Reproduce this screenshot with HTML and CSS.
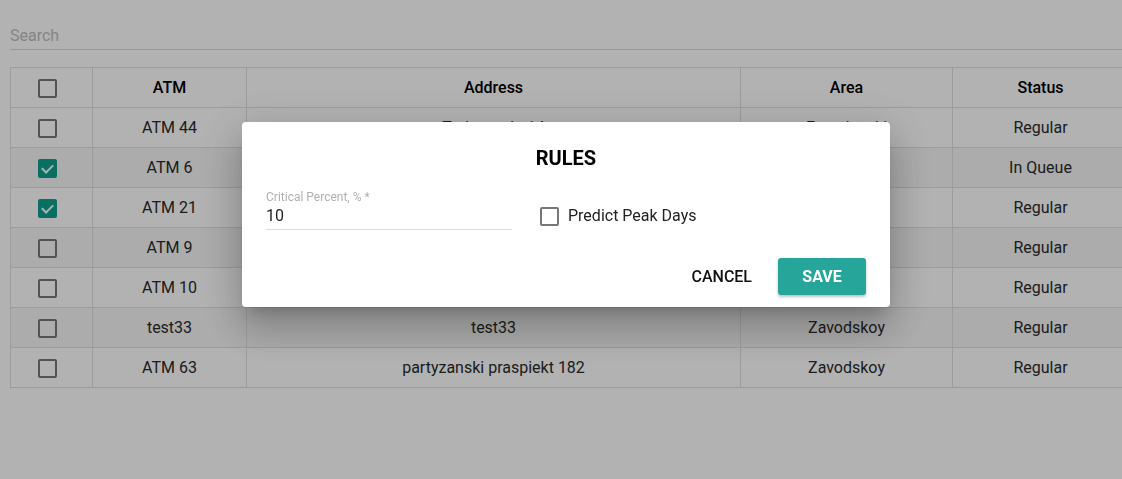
FILE: index.html
```html
<!DOCTYPE html>
<html>
<head>
<meta charset="utf-8">
<link rel="stylesheet" href="styles.css">
</head>
<body>
<div class="page">
  <div class="search"><input class="search-input" type="text" placeholder="Search"></div>
  <table class="grid">
    <colgroup>
      <col class="c-check"><col class="c-atm"><col class="c-addr"><col class="c-area"><col class="c-status">
    </colgroup>
    <thead>
      <tr><th class="cell-check"><span class="cb"></span></th><th>ATM</th><th>Address</th><th>Area</th><th>Status</th></tr>
    </thead>
    <tbody>
      <tr><td class="cell-check"><span class="cb"></span></td><td>ATM 44</td><td>Traktarnaja 14</td><td>Frunzienski</td><td>Regular</td></tr>
      <tr><td class="cell-check"><span class="cb on"></span></td><td>ATM 6</td><td>Niezaliežnasci 12</td><td>Savieckaja</td><td>In Queue</td></tr>
      <tr><td class="cell-check"><span class="cb on"></span></td><td>ATM 21</td><td>Pieramohi 4</td><td>Centralny</td><td>Regular</td></tr>
      <tr><td class="cell-check"><span class="cb"></span></td><td>ATM 9</td><td>Kalinina 7</td><td>Maskouski</td><td>Regular</td></tr>
      <tr><td class="cell-check"><span class="cb"></span></td><td>ATM 10</td><td>Lienina 22</td><td>Leninski</td><td>Regular</td></tr>
      <tr><td class="cell-check"><span class="cb"></span></td><td>test33</td><td>test33</td><td>Zavodskoy</td><td>Regular</td></tr>
      <tr><td class="cell-check"><span class="cb"></span></td><td>ATM 63</td><td>partyzanski praspiekt 182</td><td>Zavodskoy</td><td>Regular</td></tr>
    </tbody>
  </table>
</div>
<div class="overlay">
  <div class="dialog">
    <h2 class="title">RULES</h2>
    <div class="form-row">
      <label class="field">
        <span class="field-label">Critical Percent, % *</span>
        <span class="field-value">10</span>
      </label>
      <label class="check-label"><span class="cb"></span>Predict Peak Days</label>
    </div>
    <div class="actions">
      <button class="btn btn-text">CANCEL</button>
      <button class="btn btn-primary">SAVE</button>
    </div>
  </div>
</div>
</body>
</html>
```

FILE: styles.css
```css
html, body {
  margin: 0;
  padding: 0;
  height: 100%;
  overflow: hidden;
  background: #fff;
  font-family: Roboto, "Liberation Sans", sans-serif;
}
.page {
  padding-left: 10px;
  width: 1118px;
}
.search {
  padding-top: 22px;
  border-bottom: 1px solid #d8d8d8;
}
.search-input {
  display: block;
  width: 100%;
  border: 0;
  outline: none;
  padding: 0;
  height: 27px;
  font: 400 16px Roboto, sans-serif;
  background: transparent;
}
.search-input::placeholder { color: #c0c0c0; }
.grid {
  margin-top: 17px;
  width: 1118px;
  border-collapse: collapse;
  table-layout: fixed;
  font-size: 16px;
}
.c-check { width: 82px; }
.c-atm { width: 154px; }
.c-addr { width: 494px; }
.c-area { width: 212px; }
.c-status { width: 176px; }
.grid th, .grid td {
  border: 1px solid #e0e0e0;
  height: 39px;
  padding: 0;
  text-align: center;
  vertical-align: middle;
}
.grid .cell-check { padding-right: 8px; }
.grid th { font-weight: 500; color: #000; }
.grid td { color: #2a2a2a; }
.grid tbody tr:nth-child(even) { background: #f6f6f6; }
.cb {
  display: inline-block;
  box-sizing: border-box;
  width: 19px;
  height: 19px;
  border: 2px solid #777;
  border-radius: 2px;
  vertical-align: middle;
  position: relative;
}
.cb.on {
  background: #0f9f8f;
  border-color: #0f9f8f;
}
.cb.on::after {
  content: "";
  position: absolute;
  left: 4px;
  top: 1px;
  width: 5px;
  height: 9px;
  border: solid #fff;
  border-width: 0 2px 2px 0;
  transform: rotate(45deg);
}
.overlay {
  position: fixed;
  inset: 0;
  background: rgba(0, 0, 0, 0.3);
}
.dialog {
  position: absolute;
  left: 242px;
  top: 122px;
  width: 648px;
  height: 185px;
  box-sizing: border-box;
  padding: 24px 24px 0;
  background: #fff;
  border-radius: 4px;
  box-shadow: 0 11px 15px -7px rgba(0,0,0,0.2), 0 24px 38px 3px rgba(0,0,0,0.14), 0 9px 46px 8px rgba(0,0,0,0.12);
  display: flex;
  flex-direction: column;
}
.title {
  margin: 0;
  text-align: center;
  font-size: 20px;
  line-height: 24px;
  font-weight: 700;
  color: #000;
}
.form-row {
  margin-top: 20px;
  display: flex;
  align-items: flex-end;
  gap: 28px;
}
.field {
  width: 246px;
  display: flex;
  flex-direction: column;
  border-bottom: 1px solid #dcdcdc;
  padding-bottom: 1px;
}
.field-label {
  font-size: 12px;
  line-height: 14px;
  color: #b0b0b0;
}
.field-value {
  font-size: 16px;
  line-height: 24px;
  color: #222;
}
.check-label {
  display: flex;
  align-items: center;
  gap: 9px;
  font-size: 16px;
  line-height: 24px;
  color: #222;
  margin-bottom: 2px;
}
.actions {
  margin-top: 28px;
  display: flex;
  justify-content: flex-end;
  gap: 10px;
}
.btn {
  font-family: Roboto, sans-serif;
  font-size: 16px;
  height: 37px;
  border: 0;
  border-radius: 3px;
  cursor: pointer;
}
.btn-text {
  background: transparent;
  color: #111;
  font-weight: 500;
  padding: 0 16px;
}
.btn-primary {
  width: 88px;
  background: #26a69a;
  color: #fff;
  font-weight: 700;
  box-shadow: 0 2px 3px rgba(0,0,0,0.25);
}
```
